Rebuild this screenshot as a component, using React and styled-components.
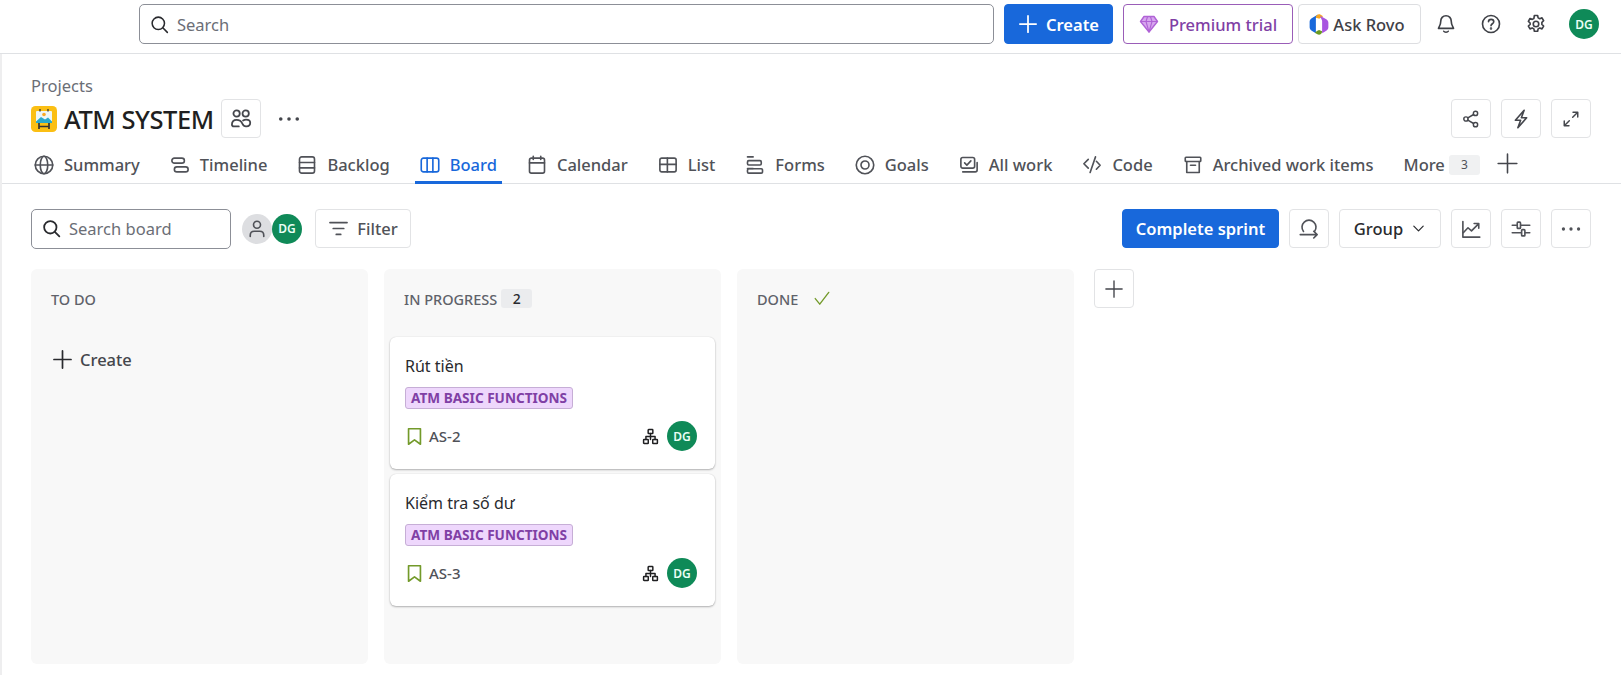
import styled, { createGlobalStyle } from "styled-components";

const GlobalStyle = createGlobalStyle`
  html, body {
    margin: 0;
    padding: 0;
    background: #fff;
    font-family: "Noto Sans", "Open Sans", Arial, sans-serif;
    color: #292a2e;
  }
  * { box-sizing: border-box; }
`;

const Svg = styled.svg`
  width: ${({ $size }) => $size || 20}px;
  height: ${({ $size }) => $size || 20}px;
  flex: none;
  fill: none;
  stroke: currentColor;
  stroke-width: ${({ $stroke }) => $stroke || 1.3};
  stroke-linecap: round;
  stroke-linejoin: round;
  color: ${({ $color }) => $color || "inherit"};
`;

function Icon({ size, color, stroke, children }) {
  return (
    <Svg viewBox="0 0 16 16" $size={size} $color={color} $stroke={stroke}>
      {children}
    </Svg>
  );
}

const icons = {
  search: <><circle cx="7" cy="7" r="5.2" /><path d="M11 11l3.6 3.6" /></>,
  plus: <path d="M8 1.5v13M1.5 8h13" />,
  bell: <><path d="M8 1.4c-2.6 0-4.2 2-4.2 4.4 0 3.2-1.6 4.6-1.8 5.7h12c-.2-1.1-1.8-2.5-1.8-5.7 0-2.4-1.6-4.4-4.2-4.4z" /><path d="M6.2 13.8c.5 1 3.1 1 3.6 0" /></>,
  help: <><circle cx="8" cy="8" r="6.8" /><path d="M6 6.2c0-2.6 4.2-2.6 4.2 0 0 1.6-2.2 1.6-2.2 3.2" /><circle cx="8" cy="11.6" r=".35" /></>,
  gear: <><circle cx="8" cy="8" r="2.2" /><path d="M6.7 1.2h2.6l.4 1.9 1.3.7 1.8-.7 1.3 2.3-1.4 1.3v1.6l1.4 1.3-1.3 2.3-1.8-.7-1.3.7-.4 1.9H6.7l-.4-1.9-1.3-.7-1.8.7-1.3-2.3 1.4-1.3V7.2L1.9 5.9l1.3-2.3 1.8.7 1.3-.7z" /></>,
  people: <><circle cx="4.8" cy="4" r="2.3" /><circle cx="11.4" cy="4" r="2.3" /><path d="M1.4 12c0-2 1.4-3.4 3.4-3.4S8.4 10 9 11.4c.6 1.3 1.4 2 2.6 2h.4c1.6 0 2.7-1.1 2.7-2.6 0-1.4-1.2-2.4-3-2.4-.9 0-1.6.3-2.2.7M1.4 12c0 .9.6 1.4 1.4 1.4h3.6" /></>,
  dots: <g fill="currentColor" stroke="none"><circle cx="2.5" cy="8" r="1.2" /><circle cx="8" cy="8" r="1.2" /><circle cx="13.5" cy="8" r="1.2" /></g>,
  globe: <><circle cx="8" cy="8" r="7" /><ellipse cx="8" cy="8" rx="3" ry="7" /><path d="M1 8h14" /></>,
  timeline: <><rect x="1.5" y="2.5" width="10" height="4" rx="2" /><rect x="3.5" y="9.5" width="11" height="4" rx="2" /></>,
  backlog: <><rect x="2" y="1.5" width="12" height="13" rx="1.8" /><path d="M2 6h12M2 10.3h12" /></>,
  board: <><rect x="1" y="2.5" width="14" height="11" rx="1.8" /><path d="M5.7 2.5v11M10.3 2.5v11" /></>,
  calendar: <><rect x="2" y="2.5" width="12" height="12" rx="1.5" /><path d="M2 6.3h12M5 1v2.5M11 1v2.5" /></>,
  list: <><rect x="1.5" y="2.5" width="13" height="11" rx="1.5" /><path d="M1.5 7.5h13M7.5 2.5v11" /></>,
  forms: <><path d="M2 1.5h4.5" /><rect x="2" y="4.5" width="11" height="3.5" rx="1" /><path d="M2 10.8h4.5" /><rect x="2" y="11" width="12" height="3.5" rx="1" /></>,
  goals: <><circle cx="8" cy="8" r="7" /><circle cx="8" cy="8" r="3.2" /></>,
  allwork: <><rect x="1.5" y="2" width="11" height="8.5" rx="1.5" /><path d="M4.5 6.3l1.8 1.8 3.2-3.4M3 13.5h10c.8 0 1.5-.7 1.5-1.5V6" /></>,
  code: <path d="M5 3.5L1.5 7 5 10.5M10.8 1.5L6.5 14M11.5 5l3 3.2-3 3.2" />,
  archive: <><rect x="1.8" y="1.8" width="12.4" height="3.4" rx=".6" /><path d="M3 5.2V14h10V5.2M6 8.2h4" /></>,
  share: <><circle cx="12" cy="3" r="1.9" /><circle cx="3.5" cy="8" r="1.9" /><circle cx="12" cy="13" r="1.9" /><path d="M5.2 7L10.3 4M5.2 9l5.1 3" /></>,
  bolt: <path d="M10.5 1L3.5 9h4.2L5.5 15l7-8H8.3z" />,
  expand: <path d="M9.5 6.5L14 2M9.8 2H14v4.2M6.5 9.5L2 14M2 9.8V14h4.2" />,
  filter: <path d="M1.5 3.5h13M4 8h8M6.3 12.5h3.4" />,
  sprint: <><path d="M3.6 10A5.6 5.6 0 1 1 12.4 10" /><path d="M1 12.5h13.5M11.8 9.8l2.7 2.7-2.7 2.7" /></>,
  chart: <><path d="M1.5 2v12.5h13.5" /><path d="M1.8 11l3.8-4 2.8 2.5 5.6-5.6M10.5 3.6h3.7v3.7" /></>,
  sliders: <><path d="M1 5h3.5M8 5H15M1 11h7M11.5 11H15" /><rect x="5" y="2.5" width="2.6" height="5" rx=".6" /><rect x="8.5" y="8.5" width="2.6" height="5" rx=".6" /></>,
  chevron: <path d="M3 5.5l5 5 5-5" />,
  check: <path d="M2 8.5l4 5L14 3" />,
  bookmark: <path d="M3 1.5h10v13l-5-3.6-5 3.6z" />,
  hierarchy: <><rect x="5.8" y="1.5" width="4.4" height="3.6" rx=".5" /><rect x="1.5" y="10.9" width="4.4" height="3.6" rx=".5" /><rect x="10.1" y="10.9" width="4.4" height="3.6" rx=".5" /><path d="M8 5.1v5.8M3.7 10.9V8h8.6v2.9" /></>,
  person: <><circle cx="8" cy="4.6" r="2.8" /><path d="M2.6 14v-1c0-1.9 1.4-3.2 3.2-3.2h4.4c1.8 0 3.2 1.3 3.2 3.2v1" /></>,
};

const Diamond = () => (
  <Svg viewBox="0 0 20 20" $size={20}>
    <path d="M5 2.5h10l3.5 5L10 18 1.5 7.5z" fill="#d7a6ee" stroke="#b063d6" strokeWidth="1.4" />
    <path d="M1.5 7.5h17M7 7.5L10 18l3-10.5M7 7.5l1.6-5M13 7.5l-1.6-5" stroke="#b063d6" strokeWidth="1.1" />
  </Svg>
);

const Rovo = () => (
  <svg width="22" height="25" viewBox="0 0 20 24" style={{ flex: "none" }}>
    <path d="M9 2.5L3 6c-1.2.7-2 1.9-2 3.3v5.4c0 1.4.8 2.6 2 3.3l4 2.3V5.5z" fill="#1868db" />
    <path d="M7 5.5c0-2.6 2.5-4 4.6-2.8L14 4l-3.5 2.5z" fill="#f5a623" />
    <path d="M11 3.5l6 3.5c1.2.7 2 1.9 2 3.3v4.4c0 1.4-.8 2.6-2 3.3l-4 2.3V8.5z" fill="#a855e0" />
    <path d="M13 18.5c0 2.6-2.5 4-4.6 2.8L6 20l3.5-3z" fill="#6a9a23" />
    <path d="M8.5 7.5l3-1.5v10.5l-3 1.5z" fill="#fff" />
  </svg>
);

const ProjectLogo = () => (
  <svg width="26" height="26" viewBox="0 0 26 26" style={{ flex: "none" }}>
    <rect width="26" height="26" rx="4.5" fill="#fbbf14" />
    <rect x="5" y="5" width="16" height="12" rx="1" fill="#eef6f6" />
    <circle cx="13" cy="8.5" r="1.8" fill="#f9a825" />
    <path d="M5 15.5l5-4.5 4 2.5 3-2 4 4v1.5H5z" fill="#29a9c9" />
    <path d="M9 3v2.5M17 3v2.5" stroke="#333" strokeWidth="1.3" />
    <path d="M8 17v6M18 17v6M8 20.5h10" stroke="#333" strokeWidth="1.7" />
  </svg>
);

const Page = styled.div`
  width: 1621px;
  height: 675px;
  overflow: hidden;
`;

const TopBar = styled.header`
  height: 54px;
  border-bottom: 1px solid #dfe1e4;
  padding: 4px 0 0 139px;
  display: flex;
  align-items: flex-start;
`;

const SearchBox = styled.div`
  width: ${({ $width }) => $width}px;
  height: 40px;
  flex: none;
  display: flex;
  align-items: center;
  gap: 8px;
  padding: 0 10px;
  border: 1px solid #8c8f97;
  border-radius: 5px;
  font-size: 16.5px;
  color: #6b6e76;
  background: #fff;
  svg { color: #292a2e; }
`;

const TopButton = styled.button`
  width: ${({ $width }) => $width}px;
  height: 40px;
  flex: none;
  margin-left: ${({ $left }) => $left}px;
  display: flex;
  align-items: center;
  justify-content: center;
  gap: ${({ $gap }) => $gap || 8}px;
  padding: 0 ${({ $padRight }) => $padRight || 0}px 0 0;
  font: inherit;
  font-size: 16.5px;
  font-weight: ${({ $variant }) => ($variant === "primary" ? 600 : 500)};
  border-radius: 4px;
  background: ${({ $variant }) => ($variant === "primary" ? "#1868db" : "#fff")};
  color: ${({ $variant }) =>
    $variant === "primary" ? "#fff" : $variant === "premium" ? "#803fa5" : "#3f4147"};
  border: 1px solid ${({ $variant }) =>
    $variant === "primary" ? "#1868db" : $variant === "premium" ? "#9a5db8" : "#dddee1"};
`;

const TopIcon = styled.div`
  width: 24px;
  height: 40px;
  flex: none;
  margin-left: ${({ $left }) => $left}px;
  display: flex;
  align-items: center;
  justify-content: center;
  color: #3f4147;
`;

const Avatar = styled.div`
  width: ${({ $size }) => $size || 30}px;
  height: ${({ $size }) => $size || 30}px;
  flex: none;
  margin-left: ${({ $left }) => $left || 0}px;
  border-radius: 50%;
  background: #0f8a58;
  color: #eafff5;
  display: flex;
  align-items: center;
  justify-content: center;
  font-size: 12px;
  font-weight: 600;
`;

const GhostAvatar = styled(Avatar)`
  background: #dddee1;
  color: #505258;
`;

const TopAvatar = styled(Avatar)`
  margin-top: 5px;
`;

const Main = styled.main`
  border-left: 2px solid #eeeeef;
  height: 621px;
  padding-top: 22px;
`;

const Crumb = styled.div`
  height: 20px;
  padding-left: 29px;
  font-size: 16.5px;
  line-height: 20px;
  color: #6b6e76;
`;

const TitleRow = styled.div`
  margin-top: 3px;
  padding: 0 30px 0 29px;
  height: 39px;
  display: flex;
  align-items: center;
`;

const Title = styled.h1`
  margin: 0 0 0 7px;
  font-size: 25.5px;
  font-weight: 500;
  letter-spacing: -0.45px;
  color: #1f1f21;
  white-space: nowrap;
`;

const SquareButton = styled.button`
  width: 40px;
  height: 39px;
  flex: none;
  margin-left: ${({ $left }) => $left || 0}px;
  padding: 0;
  display: flex;
  align-items: center;
  justify-content: center;
  background: #fff;
  color: #44464c;
  border: 1px solid #e2e3e5;
  border-radius: 4px;
`;

const Spacer = styled.div`
  flex: 1;
`;

const PlainDots = styled.div`
  margin-left: 16px;
  display: flex;
  color: #44464c;
`;

const Tabs = styled.nav`
  height: 46px;
  padding-left: 27px;
  border-bottom: 1px solid #dfe1e4;
  display: flex;
  align-items: stretch;
  gap: 20px;
`;

const Tab = styled.div`
  position: relative;
  display: flex;
  align-items: center;
  gap: 10px;
  padding: 8px 5px 0;
  font-size: 16.5px;
  font-weight: 500;
  white-space: nowrap;
  color: ${({ $active }) => ($active ? "#1868db" : "#505258")};
  ${({ $active }) =>
    $active &&
    `&::after {
      content: "";
      position: absolute;
      left: 0;
      right: 0;
      bottom: -1px;
      height: 3px;
      background: #1868db;
    }`}
`;

const CountBadge = styled.span`
  margin-left: -6px;
  width: 31px;
  height: 20px;
  border-radius: 3px;
  background: #f0f1f2;
  font-size: 12px;
  font-weight: 400;
  color: #505258;
  display: flex;
  align-items: center;
  justify-content: center;
`;

const AddTab = styled.div`
  display: flex;
  align-items: center;
  margin-left: -9px;
  padding-top: 6px;
  color: #44464c;
`;

const Toolbar = styled.div`
  margin-top: 25px;
  padding: 0 30px 0 29px;
  height: 39px;
  display: flex;
  align-items: center;
`;

const AvatarGroup = styled.div`
  display: flex;
  margin-left: 11px;
`;

const ToolButton = styled.button`
  width: ${({ $width }) => $width || 40}px;
  height: 39px;
  flex: none;
  margin-left: ${({ $left }) => $left ?? 10}px;
  padding: 0;
  display: flex;
  align-items: center;
  justify-content: center;
  gap: ${({ $gap }) => $gap || 8}px;
  font: inherit;
  font-size: 16.5px;
  font-weight: ${({ $primary }) => ($primary ? 600 : 500)};
  background: ${({ $primary }) => ($primary ? "#1868db" : "#fff")};
  color: ${({ $primary, $dark }) => ($primary ? "#fff" : $dark ? "#292a2e" : "#505258")};
  border: 1px solid ${({ $primary }) => ($primary ? "#1868db" : "#e2e3e5")};
  border-radius: 4px;
`;

const Board = styled.div`
  margin-top: 21px;
  padding-left: 29px;
  display: flex;
  align-items: flex-start;
  gap: 16px;
`;

const Column = styled.section`
  width: 337px;
  height: 395px;
  flex: none;
  padding: 0 6px;
  border-radius: 6px;
  background: #f8f8f8;
`;

const ColumnHeader = styled.div`
  height: 68px;
  padding: 20px 0 0 14px;
  display: flex;
  align-items: flex-start;
  gap: ${({ $gap }) => $gap || 4}px;
  font-size: 14.5px;
  line-height: 20px;
  font-weight: 500;
  color: #5f626a;
`;

const HeaderCount = styled.span`
  width: 31px;
  height: 19px;
  border-radius: 3px;
  background: #ebecee;
  color: #292a2e;
  font-size: 14px;
  line-height: 19px;
  text-align: center;
`;

const ColumnCreate = styled.div`
  margin: 7px 0 0 15px;
  height: 30px;
  display: flex;
  align-items: center;
  gap: 7px;
  font-size: 16.5px;
  font-weight: 500;
  color: #44464c;
  svg { color: #292a2e; }
`;

const CardList = styled.div`
  display: flex;
  flex-direction: column;
  gap: 5px;
`;

const Card = styled.article`
  height: 132px;
  padding: 19px 18px 0 15px;
  background: #fff;
  border-radius: 6px;
  box-shadow: 0 1px 2px rgba(30, 31, 33, 0.32), 0 0 1px rgba(30, 31, 33, 0.16);
`;

const CardTitle = styled.div`
  font-size: 16px;
  line-height: 20px;
  color: #292a2e;
`;

const Tag = styled.span`
  display: inline-block;
  margin-top: 11px;
  height: 22px;
  padding: 0 5px;
  border: 1px solid #c6aed6;
  border-radius: 3px;
  background: #eed7fc;
  color: #803fa5;
  font-size: 13.6px;
  line-height: 20px;
  font-weight: 700;
  white-space: nowrap;
`;

const CardFooter = styled.div`
  margin-top: 12px;
  height: 30px;
  display: flex;
  align-items: center;
`;

const CardKey = styled.span`
  margin-left: 5px;
  font-size: 15px;
  font-weight: 500;
  color: #505258;
`;

const HierarchyWrap = styled.span`
  display: flex;
  margin-right: 8px;
  color: #1f1f21;
`;

const KeySpot = styled.span`
  display: flex;
  margin-left: 0;
`;

const tabs = [
  ["globe", "Summary"],
  ["timeline", "Timeline"],
  ["backlog", "Backlog"],
  ["board", "Board"],
  ["calendar", "Calendar"],
  ["list", "List"],
  ["forms", "Forms"],
  ["goals", "Goals"],
  ["allwork", "All work"],
  ["code", "Code"],
  ["archive", "Archived work items"],
];

const cards = [
  { title: "Rút tiền", key: "AS-2" },
  { title: "Kiểm tra số dư", key: "AS-3" },
];

function IssueCard({ title, issueKey }) {
  return (
    <Card>
      <CardTitle>{title}</CardTitle>
      <Tag>ATM BASIC FUNCTIONS</Tag>
      <CardFooter>
        <KeySpot>
          <Icon size={19} color="#739a2a" stroke={1.4}>{icons.bookmark}</Icon>
        </KeySpot>
        <CardKey>{issueKey}</CardKey>
        <Spacer />
        <HierarchyWrap>
          <Icon size={17} stroke={1.4}>{icons.hierarchy}</Icon>
        </HierarchyWrap>
        <Avatar>DG</Avatar>
      </CardFooter>
    </Card>
  );
}

export default function App() {
  return (
    <Page>
      <GlobalStyle />
      <TopBar>
        <SearchBox $width={855}>
          <Icon size={19}>{icons.search}</Icon>
          Search
        </SearchBox>
        <TopButton $variant="primary" $width={109} $left={10}>
          <Icon size={20} stroke={1.4}>{icons.plus}</Icon>
          Create
        </TopButton>
        <TopButton $variant="premium" $width={170} $left={10} $gap={10}>
          <Diamond />
          Premium trial
        </TopButton>
        <TopButton $width={123} $left={5} $gap={3} $padRight={6}>
          <Rovo />
          Ask Rovo
        </TopButton>
        <TopIcon $left={13}><Icon size={20}>{icons.bell}</Icon></TopIcon>
        <TopIcon $left={21}><Icon size={20}>{icons.help}</Icon></TopIcon>
        <TopIcon $left={21}><Icon size={20}>{icons.gear}</Icon></TopIcon>
        <TopAvatar $left={21}>DG</TopAvatar>
      </TopBar>
      <Main>
        <Crumb>Projects</Crumb>
        <TitleRow>
          <ProjectLogo />
          <Title>ATM SYSTEM</Title>
          <SquareButton $left={7}>
            <Icon size={22}>{icons.people}</Icon>
          </SquareButton>
          <PlainDots>
            <Icon size={24}>{icons.dots}</Icon>
          </PlainDots>
          <Spacer />
          <SquareButton><Icon size={18}>{icons.share}</Icon></SquareButton>
          <SquareButton $left={10}><Icon size={20}>{icons.bolt}</Icon></SquareButton>
          <SquareButton $left={10}><Icon size={18}>{icons.expand}</Icon></SquareButton>
        </TitleRow>
        <Tabs>
          {tabs.map(([icon, label]) => (
            <Tab key={label} $active={label === "Board"}>
              <Icon size={20}>{icons[icon]}</Icon>
              {label}
            </Tab>
          ))}
          <Tab>
            More
            <CountBadge>3</CountBadge>
          </Tab>
          <AddTab><Icon size={23} stroke={1.1}>{icons.plus}</Icon></AddTab>
        </Tabs>
        <Toolbar>
          <SearchBox $width={200}>
            <Icon size={19} stroke={1.5}>{icons.search}</Icon>
            Search board
          </SearchBox>
          <AvatarGroup>
            <GhostAvatar><Icon size={20}>{icons.person}</Icon></GhostAvatar>
            <Avatar>DG</Avatar>
          </AvatarGroup>
          <ToolButton $left={13} $width={96}>
            <Icon size={21}>{icons.filter}</Icon>
            Filter
          </ToolButton>
          <Spacer />
          <ToolButton $primary $width={157}>Complete sprint</ToolButton>
          <ToolButton><Icon size={20}>{icons.sprint}</Icon></ToolButton>
          <ToolButton $dark $width={102}>
            Group
            <Icon size={15}>{icons.chevron}</Icon>
          </ToolButton>
          <ToolButton><Icon size={20}>{icons.chart}</Icon></ToolButton>
          <ToolButton><Icon size={20}>{icons.sliders}</Icon></ToolButton>
          <ToolButton><Icon size={22}>{icons.dots}</Icon></ToolButton>
        </Toolbar>
        <Board>
          <Column>
            <ColumnHeader>TO DO</ColumnHeader>
            <ColumnCreate>
              <Icon size={21} stroke={1.3}>{icons.plus}</Icon>
              Create
            </ColumnCreate>
          </Column>
          <Column>
            <ColumnHeader>
              IN PROGRESS
              <HeaderCount>2</HeaderCount>
            </ColumnHeader>
            <CardList>
              {cards.map((c) => (
                <IssueCard key={c.key} title={c.title} issueKey={c.key} />
              ))}
            </CardList>
          </Column>
          <Column>
            <ColumnHeader $gap={15}>
              DONE
              <Icon size={18} color="#739a2a" stroke={1.2}>{icons.check}</Icon>
            </ColumnHeader>
          </Column>
          <SquareButton $left={4}><Icon size={20} stroke={1.1}>{icons.plus}</Icon></SquareButton>
        </Board>
      </Main>
    </Page>
  );
}
